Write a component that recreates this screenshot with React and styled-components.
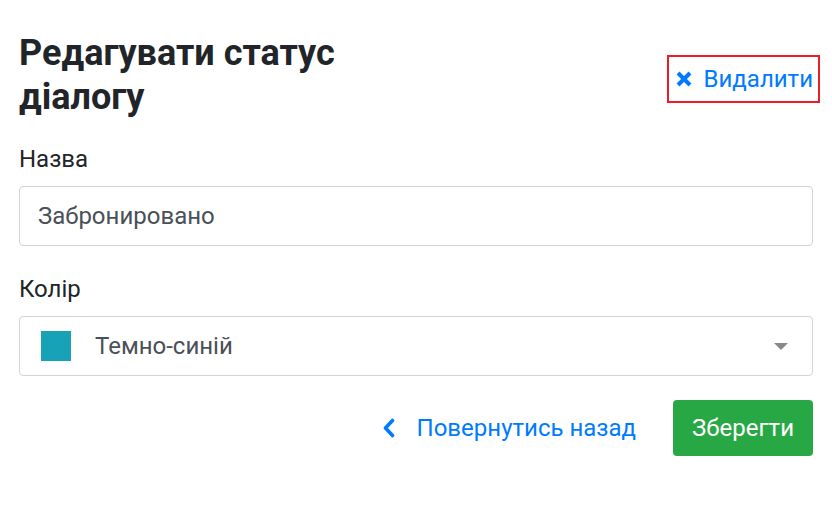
import React, { useState } from "react";
import styled, { createGlobalStyle } from "styled-components";

const GlobalStyle = createGlobalStyle`
  body {
    margin: 0;
    background: #fff;
    font-family: Roboto, "Liberation Sans", sans-serif;
    color: #212529;
  }
`;

const App = () => {
  const [name, setName] = useState("Забронировано");

  return (
    <S.Page>
      <GlobalStyle />
      <S.Header>
        <S.Title>Редагувати статус діалогу</S.Title>
        <S.DeleteButton type="button">
          <S.CrossIcon viewBox="0 0 18 18">
            <path d="M3 3 L15 15 M15 3 L3 15" />
          </S.CrossIcon>
          Видалити
        </S.DeleteButton>
      </S.Header>

      <S.Field spacing={28}>
        <S.Label>Назва</S.Label>
        <S.Input value={name} onChange={(e) => setName(e.target.value)} />
      </S.Field>

      <S.Field spacing={24}>
        <S.Label>Колір</S.Label>
        <S.SelectBox>
          <S.Swatch color="#17a2b8" />
          <S.SelectText>Темно-синій</S.SelectText>
          <S.Caret />
        </S.SelectBox>
      </S.Field>

      <S.Actions>
        <S.BackLink type="button">
          <S.ChevronIcon viewBox="0 0 14 20">
            <path d="M10.5 2.5 L3.5 10 L10.5 17.5" />
          </S.ChevronIcon>
          Повернутись назад
        </S.BackLink>
        <S.SaveButton type="button">Зберегти</S.SaveButton>
      </S.Actions>
    </S.Page>
  );
};

export default App;

const S = {
  Page: styled.div`
    padding: 31px 19px 0 19px;
    display: flex;
    flex-direction: column;
  `,

  Header: styled.div`
    display: flex;
    align-items: center;
    justify-content: space-between;
    margin-bottom: 25px;
  `,

  Title: styled.h2`
    margin: 0;
    max-width: 400px;
    font-size: 36px;
    line-height: 44px;
    font-weight: 700;
    color: #212529;
  `,

  DeleteButton: styled.button`
    display: flex;
    align-items: center;
    gap: 11px;
    margin: 8px -7px 0 0;
    height: 48px;
    padding: 0 5px 0 6px;
    border: 2px solid #ee1c25;
    background: transparent;
    color: #007bff;
    font-family: inherit;
    font-size: 24px;
    cursor: pointer;
  `,

  CrossIcon: styled.svg`
    width: 18px;
    height: 18px;
    fill: none;
    stroke: #007bff;
    stroke-width: 4;
    stroke-linecap: butt;
  `,

  Field: styled.div`
    display: flex;
    flex-direction: column;
    gap: 12px;
    margin-bottom: ${(props) => props.spacing}px;
  `,

  Label: styled.label`
    font-size: 24px;
    line-height: 30px;
    color: #212529;
  `,

  Input: styled.input`
    box-sizing: border-box;
    height: 60px;
    width: 100%;
    padding: 0 18px;
    border: 1px solid #ced4da;
    border-radius: 4px;
    font-family: inherit;
    font-size: 24px;
    color: #495057;
    outline: none;
  `,

  SelectBox: styled.div`
    box-sizing: border-box;
    height: 60px;
    display: flex;
    align-items: center;
    padding: 0 24px 0 21px;
    border: 1px solid #ced4da;
    border-radius: 4px;
    cursor: pointer;
  `,

  Swatch: styled.span`
    width: 30px;
    height: 30px;
    flex-shrink: 0;
    background: ${(props) => props.color};
  `,

  SelectText: styled.span`
    flex: 1;
    margin-left: 24px;
    font-size: 24px;
    color: #495057;
  `,

  Caret: styled.span`
    width: 0;
    height: 0;
    border-left: 7px solid transparent;
    border-right: 7px solid transparent;
    border-top: 7px solid #888;
    margin-top: 1px;
  `,

  Actions: styled.div`
    display: flex;
    justify-content: flex-end;
    align-items: center;
    gap: 37px;
  `,

  BackLink: styled.button`
    display: flex;
    align-items: center;
    gap: 21px;
    padding: 0;
    border: none;
    background: transparent;
    color: #007bff;
    font-family: inherit;
    font-size: 24px;
    cursor: pointer;
  `,

  ChevronIcon: styled.svg`
    width: 14px;
    height: 20px;
    fill: none;
    stroke: #007bff;
    stroke-width: 3.6;
    stroke-linecap: round;
    stroke-linejoin: round;
  `,

  SaveButton: styled.button`
    height: 56px;
    padding: 0 19px;
    border: none;
    border-radius: 4px;
    background: #28a745;
    color: #fff;
    font-family: inherit;
    font-size: 24px;
    cursor: pointer;
  `,
};
